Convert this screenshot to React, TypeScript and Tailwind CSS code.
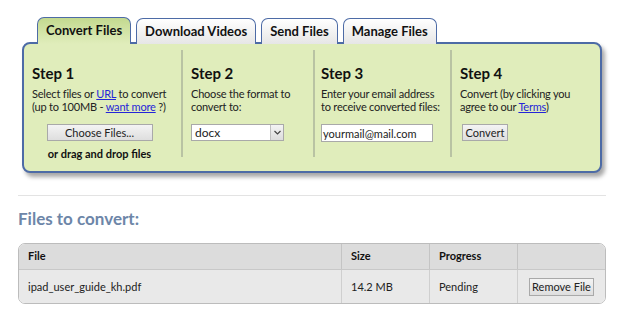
import React from "react";

const font = { fontFamily: 'Lato, "Noto Sans", "Liberation Sans", sans-serif' };

function Tab({ label, active }: { label: string; active?: boolean }) {
  if (active) {
    return (
      <div className="relative z-10 h-[27px] px-[8px] rounded-t-[7px] border-[1.5px] border-b-0 border-[#4d6ba6] bg-gradient-to-b from-[#c3d98f] to-[#e0edbb] flex items-center text-[13px] font-bold text-[#111]">
        {label}
      </div>
    );
  }
  return (
    <div className="h-[26px] px-[8px] rounded-t-[7px] border-[1.5px] border-b-0 border-[#4d6ba6] bg-gradient-to-b from-white to-[#e6e6e6] flex items-center text-[13px] font-bold text-[#111]">
      {label}
    </div>
  );
}

function Btn({ children, className = "" }: { children: React.ReactNode; className?: string }) {
  return (
    <div className={"h-[17px] border border-[#a9a9a9] bg-gradient-to-b from-[#f4f4f4] to-[#dedede] flex items-center justify-center text-[11px] text-[#222] whitespace-nowrap " + className}>
      {children}
    </div>
  );
}

export default function App() {
  return (
    <div className="w-[620px] h-[317px] bg-white overflow-hidden" style={font}>
      <div className="pt-[16px] pl-[37px] flex items-end gap-[5px] h-[44px]">
        <Tab label="Convert Files" active />
        <Tab label="Download Videos" />
        <Tab label="Send Files" />
        <Tab label="Manage Files" />
      </div>
      <div className="-mt-[2px] ml-[22px] w-[580px] h-[131px] rounded-[8px] border-2 border-[#4d6ba6] bg-[#e0edbb] shadow-[3px_4px_4px_rgba(0,0,0,0.35)] flex pt-[6px] text-[11px] leading-[13px] text-[#222]">
        <div className="w-[159px] h-[107px] pl-[8px] pr-[10px] border-r-2 border-[#b9c3a3] flex flex-col">
          <div className="mt-[14px] text-[15px] leading-[18px] font-bold text-[#111]">Step 1</div>
          <div className="mt-[5px] whitespace-nowrap tracking-[-0.2px]">
            Select files or <span className="underline text-[#2525d8]">URL</span> to convert
            <br />
            (up to 100MB - <span className="underline text-[#2525d8]">want more</span> ?)
          </div>
          <div className="mt-[11px] flex flex-col items-center pr-[4px]">
            <Btn className="w-[106px]">Choose Files...</Btn>
            <div className="mt-[6px] font-bold text-[11px] text-[#111] whitespace-nowrap">or drag and drop files</div>
          </div>
        </div>
        <div className="w-[132px] h-[107px] pl-[8px] pr-[6px] border-r-2 border-[#b9c3a3] flex flex-col">
          <div className="mt-[14px] text-[15px] leading-[18px] font-bold text-[#111]">Step 2</div>
          <div className="mt-[5px] whitespace-nowrap tracking-[-0.2px]">Choose the format to<br />convert to:</div>
          <div className="mt-[11px] w-[93px] h-[17px] bg-white border border-[#a9a9a9] flex items-center">
            <span className="flex-1 pl-[3px] text-[12px]">docx</span>
            <span className="w-[13px] h-[15px] border-l border-[#c0c0c0] bg-gradient-to-b from-[#f4f4f4] to-[#dcdcdc] flex items-center justify-center">
              <svg width="7" height="5" viewBox="0 0 7 5"><path d="M0.5 1 L3.5 4 L6.5 1" fill="none" stroke="#444" strokeWidth="1.2" /></svg>
            </span>
          </div>
        </div>
        <div className="w-[137px] h-[107px] pl-[6px] pr-[4px] border-r-2 border-[#b9c3a3] flex flex-col">
          <div className="mt-[14px] text-[15px] leading-[18px] font-bold text-[#111]">Step 3</div>
          <div className="mt-[5px] whitespace-nowrap tracking-[-0.2px]">Enter your email address<br />to receive converted files:</div>
          <div className="mt-[11px] w-[112px] h-[18px] bg-white border border-[#a9a9a9] flex items-center pl-[1px] text-[11px]">yourmail@mail.com</div>
        </div>
        <div className="flex-1 pl-[8px] flex flex-col">
          <div className="mt-[14px] text-[15px] leading-[18px] font-bold text-[#111]">Step 4</div>
          <div className="mt-[5px] whitespace-nowrap tracking-[-0.2px]">Convert (by clicking you<br />agree to our <span className="underline text-[#2525d8]">Terms</span>)</div>
          <div className="mt-[11px] pl-[2px]">
            <Btn className="w-[46px]">Convert</Btn>
          </div>
        </div>
      </div>
      <div className="mt-[22px] ml-[18px] w-[588px] h-px bg-[#e3e3e3]" />
      <div className="mt-[12px] ml-[18px] text-[17px] leading-[22px] font-bold text-[#6d86a8]">Files to convert:</div>
      <div className="mt-[13px] ml-[18px] w-[588px] h-[61px] rounded-[7px] border border-[#bcbcbc] overflow-hidden text-[11px] text-[#222]">
        <div className="h-[26px] bg-[#dcdcdc] border-b border-[#c8c8c8] flex font-bold text-[#111]">
          <div className="w-[323px] pl-[9px] flex items-center border-r border-[#c4c4c4]">File</div>
          <div className="w-[88px] pl-[9px] flex items-center border-r border-[#c4c4c4]">Size</div>
          <div className="w-[88px] pl-[9px] flex items-center border-r border-[#c4c4c4]">Progress</div>
          <div className="flex-1" />
        </div>
        <div className="h-[34px] bg-[#e9e9e9] flex">
          <div className="w-[323px] pl-[9px] flex items-center border-r border-[#cfcfcf]">ipad_user_guide_kh.pdf</div>
          <div className="w-[88px] pl-[9px] flex items-center border-r border-[#cfcfcf]">14.2 MB</div>
          <div className="w-[88px] pl-[9px] flex items-center border-r border-[#cfcfcf]">Pending</div>
          <div className="flex-1 flex items-center justify-center">
            <Btn className="w-[65px] h-[18px]">Remove File</Btn>
          </div>
        </div>
      </div>
    </div>
  );
}
